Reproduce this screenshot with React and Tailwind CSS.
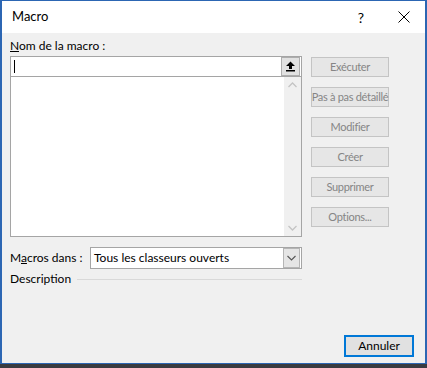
export default function App() {
    return (
        <div className="w-[427px] h-[368px] bg-[#3a3b40] overflow-hidden" style={{ fontFamily: 'Lato, "Noto Sans", sans-serif' }}>
            <div className="h-[364px] border-l-2 border-r-2 border-t border-b border-[#2c66b3] bg-[#f0f0f0] flex flex-col text-[12px] text-black">
                {/* Title bar */}
                <div className="h-[32px] bg-white flex items-center pl-[10px] shrink-0">
                    <span className="text-[13px]">Macro</span>
                    <span className="ml-auto mr-[34px] text-[14px]">?</span>
                    <svg width="12" height="12" viewBox="0 0 12 12" className="mr-[15px]">
                        <path d="M0.5 0.5 L11.5 11.5 M11.5 0.5 L0.5 11.5" stroke="#000" strokeWidth="1" />
                    </svg>
                </div>

                <div className="flex-1 flex flex-col pl-[8px]">
                    <div className="flex mt-[5px]">
                        {/* Left column */}
                        <div className="w-[292px] flex flex-col">
                            <div className="h-[16px] leading-[16px]">
                                <span className="underline">N</span>om de la macro :
                            </div>
                            <div className="mt-[2px] h-[21px] border border-[#a5a5a5] bg-white flex items-center">
                                <div className="ml-[3px] w-px h-[13px] bg-black" />
                                <div className="ml-auto mr-px h-[19px] w-[19px] bg-[#e1e1e1] border border-[#adadad] flex items-center justify-center">
                                    <svg width="11" height="11" viewBox="0 0 11 11">
                                        <path d="M5.5 0.5 L10 5 L7 5 L7 8 L4 8 L4 5 L1 5 Z" fill="#000" />
                                        <rect x="1" y="9" width="9" height="1.5" fill="#000" />
                                    </svg>
                                </div>
                            </div>
                            <div className="h-[160px] border border-t-0 border-[#a5a5a5] bg-white flex">
                                <div className="flex-1" />
                                <div className="w-[17px] bg-[#f0f0f0] flex flex-col items-center justify-between py-[5px]">
                                    <svg width="9" height="6" viewBox="0 0 9 6">
                                        <path d="M0.5 5 L4.5 1 L8.5 5" stroke="#c4c4c4" strokeWidth="1.3" fill="none" />
                                    </svg>
                                    <svg width="9" height="6" viewBox="0 0 9 6">
                                        <path d="M0.5 1 L4.5 5 L8.5 1" stroke="#c4c4c4" strokeWidth="1.3" fill="none" />
                                    </svg>
                                </div>
                            </div>
                        </div>

                        {/* Right column */}
                        <div className="ml-[9px] w-[78px] flex flex-col gap-[10px] pt-[19px]">
                            {["Exécuter", "Pas à pas détaillé", "Modifier", "Créer", "Supprimer", "Options..."].map((label) => (
                                <div
                                    key={label}
                                    className="h-[20px] border border-[#c4c4c4] bg-[#e6e6e6] text-[#858585] text-[11px] tracking-[-0.3px] flex items-center justify-center whitespace-nowrap"
                                >
                                    {label}
                                </div>
                            ))}
                        </div>
                    </div>

                    {/* Macros dans */}
                    <div className="w-[292px] flex items-center mt-[10px]">
                        <div className="w-[80px]">
                            M<span className="underline">a</span>cros dans :
                        </div>
                        <div className="flex-1 h-[22px] border border-[#a5a5a5] bg-white flex items-center pl-[3px]">
                            <span>Tous les classeurs ouverts</span>
                            <div className="ml-auto mr-px h-[20px] w-[17px] bg-[#e5e5e5] border border-[#b5b5b5] flex items-center justify-center">
                                <svg width="9" height="6" viewBox="0 0 9 6">
                                    <path d="M0.5 1 L4.5 5 L8.5 1" stroke="#555" strokeWidth="1.1" fill="none" />
                                </svg>
                            </div>
                        </div>
                    </div>

                    {/* Description */}
                    <div className="w-[292px] flex items-center mt-px h-[18px]">
                        <span>Description</span>
                        <div className="flex-1 ml-[6px] h-px bg-[#d9d9d9]" />
                    </div>

                    <div className="flex-1" />

                    <div className="flex justify-end mr-[11px] mb-[6px]">
                        <div className="w-[70px] h-[22px] border-2 border-[#0078d7] bg-[#e1e1e1] flex items-center justify-center">
                            Annuler
                        </div>
                    </div>
                </div>
            </div>
        </div>
    );
}
